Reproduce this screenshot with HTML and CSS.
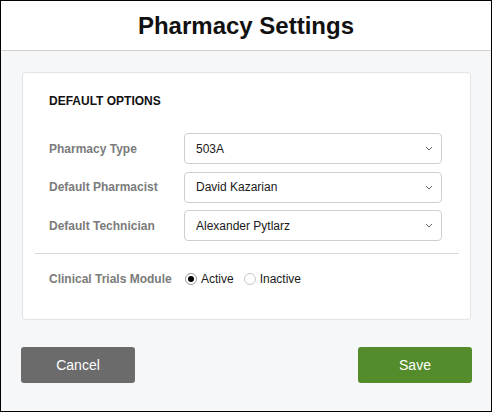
FILE: index.html
```html
<!DOCTYPE html>
<html>
<head>
<meta charset="utf-8">
<link rel="stylesheet" href="styles.css">
</head>
<body>
<div class="dialog">
  <header class="header"><h1 class="title">Pharmacy Settings</h1></header>
  <main class="main">
    <section class="card">
      <div class="card-body">
        <h2 class="heading">DEFAULT OPTIONS</h2>
        <div class="rows">
          <div class="row">
            <span class="label">Pharmacy Type</span>
            <div class="select"><span>503A</span><svg class="chev" width="8" height="5" viewBox="0 0 8 5"><path d="M1 1 L4 4 L7 1" fill="none" stroke="#666" stroke-width="1"/></svg></div>
          </div>
          <div class="row">
            <span class="label">Default Pharmacist</span>
            <div class="select"><span>David Kazarian</span><svg class="chev" width="8" height="5" viewBox="0 0 8 5"><path d="M1 1 L4 4 L7 1" fill="none" stroke="#666" stroke-width="1"/></svg></div>
          </div>
          <div class="row">
            <span class="label">Default Technician</span>
            <div class="select"><span>Alexander Pytlarz</span><svg class="chev" width="8" height="5" viewBox="0 0 8 5"><path d="M1 1 L4 4 L7 1" fill="none" stroke="#666" stroke-width="1"/></svg></div>
          </div>
        </div>
      </div>
      <hr class="divider">
      <div class="card-body radio-row">
        <span class="label">Clinical Trials Module</span>
        <div class="radios">
          <label class="radio"><span class="dot checked"></span>Active</label>
          <label class="radio"><span class="dot"></span>Inactive</label>
        </div>
      </div>
    </section>
    <div class="actions">
      <button class="btn btn-cancel">Cancel</button>
      <button class="btn btn-save">Save</button>
    </div>
  </main>
</div>
</body>
</html>
```
FILE: styles.css
```css
* { box-sizing: border-box; }
html, body { margin: 0; padding: 0; }
body {
  font-family: "Liberation Sans", Arial, Helvetica, sans-serif;
  background: #fff;
}
.dialog {
  width: 492px;
  height: 412px;
  border: 1px solid #000;
  display: flex;
  flex-direction: column;
  background: #f6f7f9;
}
.header {
  height: 50px;
  background: #fff;
  border-bottom: 1px solid #d2d2d2;
  display: flex;
  align-items: center;
  justify-content: center;
}
.title {
  margin: 0;
  font-size: 24px;
  font-weight: bold;
  color: #111;
  line-height: 28px;
}
.main {
  flex: 1;
  padding: 21px 19px 0 20px;
  display: flex;
  flex-direction: column;
}
.card {
  margin: 0 1px 0 1px;
  height: 248px;
  background: #fff;
  border: 1px solid #e4e4e4;
  border-radius: 4px;
}
.card-body {
  padding: 0 28px 0 26px;
}
.heading {
  margin: 20px 0 0 0;
  font-size: 12px;
  line-height: 16px;
  font-weight: bold;
  color: #111;
}
.rows {
  margin-top: 24px;
  display: flex;
  flex-direction: column;
  gap: 7.5px;
}
.row {
  display: grid;
  grid-template-columns: 135px 1fr;
  align-items: center;
}
.label {
  font-size: 12px;
  font-weight: bold;
  color: #7b7b7b;
}
.select {
  height: 31px;
  border: 1px solid #cfcfcf;
  border-radius: 4px;
  padding: 0 8px 0 11px;
  display: flex;
  align-items: center;
  justify-content: space-between;
  font-size: 12px;
  color: #1a1a1a;
  background: #fff;
}
.chev { display: block; }
.divider {
  margin: 12px 11px 0 12px;
  border: 0;
  border-top: 1px solid #d9d9d9;
  height: 0;
}
.radio-row {
  display: grid;
  grid-template-columns: 135px 1fr;
  align-items: center;
  margin-top: 17px;
  height: 16px;
}
.radios {
  display: flex;
  align-items: center;
  gap: 9px;
}
.radio {
  display: flex;
  align-items: center;
  gap: 4px;
  font-size: 12px;
  color: #1a1a1a;
}
.dot {
  width: 12px;
  height: 12px;
  border-radius: 50%;
  border: 1px solid #c8c8c8;
  background: #fff;
  display: flex;
  align-items: center;
  justify-content: center;
  margin-left: 1px;
}
.dot.checked { border-color: #9a9a9a; }
.dot.checked::after {
  content: "";
  width: 6px;
  height: 6px;
  border-radius: 50%;
  background: #000;
}
.actions {
  margin-top: 27px;
  display: flex;
  justify-content: space-between;
}
.btn {
  width: 114px;
  height: 36px;
  border: 0;
  border-radius: 3px;
  color: #fff;
  font-family: "Liberation Sans", Arial, Helvetica, sans-serif;
  font-size: 14px;
  padding: 0;
}
.btn-cancel { background: #6b6b6b; }
.btn-save { background: #548c2b; }
```
